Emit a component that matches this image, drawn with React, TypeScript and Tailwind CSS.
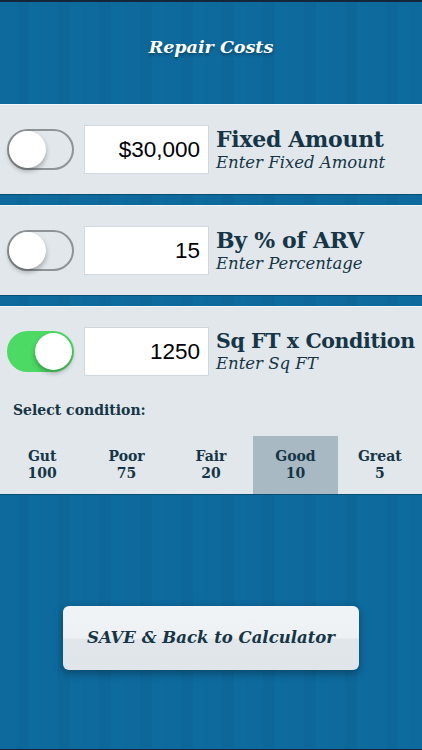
import React, { useState } from 'react';

const serif = "font-['DejaVu_Serif',serif]";

const Toggle: React.FC<{ on: boolean; onClick: () => void }> = ({ on, onClick }) => (
  <button
    onClick={onClick}
    className={`relative w-[67px] h-[41px] shrink-0 rounded-full border-2 ${
      on ? 'bg-[#4cd964] border-[#4cd964]' : 'bg-[#e1e7eb] border-[#8e9396]'
    }`}
  >
    <span
      className={`absolute top-[0px] w-[37px] h-[37px] rounded-full bg-white shadow-[0_3px_5px_rgba(0,0,0,0.3)] ${
        on ? 'left-[26px]' : 'left-[0px]'
      }`}
    />
  </button>
);

const Row: React.FC<{
  on: boolean;
  onToggle: () => void;
  value: string;
  title: string;
  sub: string;
  titleClass?: string;
}> = ({ on, onToggle, value, title, sub, titleClass = 'text-[22px] tracking-[-0.3px]' }) => (
  <div className="h-[89px] flex items-center pl-[7px]">
    <Toggle on={on} onClick={onToggle} />
    <div className="ml-[10px] w-[125px] h-[49px] shrink-0 bg-white border border-[#cfd8de] flex items-center justify-end pr-[8px] font-['Liberation_Sans',sans-serif] text-[22.5px] text-black">
      {value}
    </div>
    <div className={`ml-[7px] flex flex-col ${serif} text-[#163546] leading-none`}>
      <span className={`${titleClass} font-bold whitespace-nowrap`}>{title}</span>
      <span className="text-[16.5px] italic mt-[5px] whitespace-nowrap">{sub}</span>
    </div>
  </div>
);

const conditions = [
  { name: 'Gut', n: 100 },
  { name: 'Poor', n: 75 },
  { name: 'Fair', n: 20 },
  { name: 'Good', n: 10 },
  { name: 'Great', n: 5 },
];

export default function App() {
  const [mode, setMode] = useState(2);
  const [sel, setSel] = useState(3);

  return (
    <div className="w-full h-[750px] overflow-hidden flex flex-col border-t-2 border-b border-[#13263a] bg-[repeating-linear-gradient(90deg,#0e6a9d_0px,#0e6a9d_17px,#0d6799_17px,#0d6799_29px,#0e6b9e_29px,#0e6b9e_41px)]">
      {/* header */}
      <div className="h-[102px] flex items-center justify-center pb-[12px]">
        <h1 className={`${serif} italic font-bold text-[17.5px] text-white [text-shadow:0_2px_3px_rgba(0,0,0,0.35)]`}>
          Repair Costs
        </h1>
      </div>

      <div className="bg-[#e1e7eb] border-t border-[#f2f6f8] shadow-[0_1px_0_#0a4d73]">
        <Row on={mode === 0} onToggle={() => setMode(0)} value="$30,000" title="Fixed Amount" sub="Enter Fixed Amount" />
      </div>

      <div className="mt-[11px] bg-[#e1e7eb] border-t border-[#f2f6f8] shadow-[0_1px_0_#0a4d73]">
        <Row on={mode === 1} onToggle={() => setMode(1)} value="15" title="By % of ARV" sub="Enter Percentage" />
      </div>

      <div className="mt-[11px] bg-[#e1e7eb] border-t border-[#f2f6f8] shadow-[0_1px_0_#0a4d73]">
        <Row
          on={mode === 2}
          onToggle={() => setMode(2)}
          value="1250"
          title="Sq FT x Condition"
          sub="Enter Sq FT"
          titleClass="text-[20.5px] tracking-[-0.4px]"
        />
        <div className={`px-[13px] h-[40px] pb-[12px] flex items-center ${serif} font-bold text-[14px] text-[#163546]`}>
          Select condition:
        </div>
        <div className="grid grid-cols-5 h-[58px]">
          {conditions.map((c, i) => (
            <button
              key={c.name}
              onClick={() => setSel(i)}
              className={`flex flex-col items-center justify-center ${serif} font-bold text-[14px] leading-[17px] text-[#163546] ${
                sel === i ? 'bg-[#a8b9c3]' : ''
              }`}
            >
              <span>{c.name}</span>
              <span>{c.n}</span>
            </button>
          ))}
        </div>
      </div>

      <div className="mt-[112px] flex justify-center">
        <button className="w-[296px] h-[64px] rounded-[6px] bg-[linear-gradient(#f1f4f6_0%,#eef1f3_50%,#e0e6e9_52%,#dfe5e8_100%)] shadow-[0_3px_8px_rgba(0,0,0,0.35)] flex items-center justify-center">
          <span className={`${serif} italic font-bold text-[16.5px] text-[#163546]`}>SAVE &amp; Back to Calculator</span>
        </button>
      </div>
    </div>
  );
}
